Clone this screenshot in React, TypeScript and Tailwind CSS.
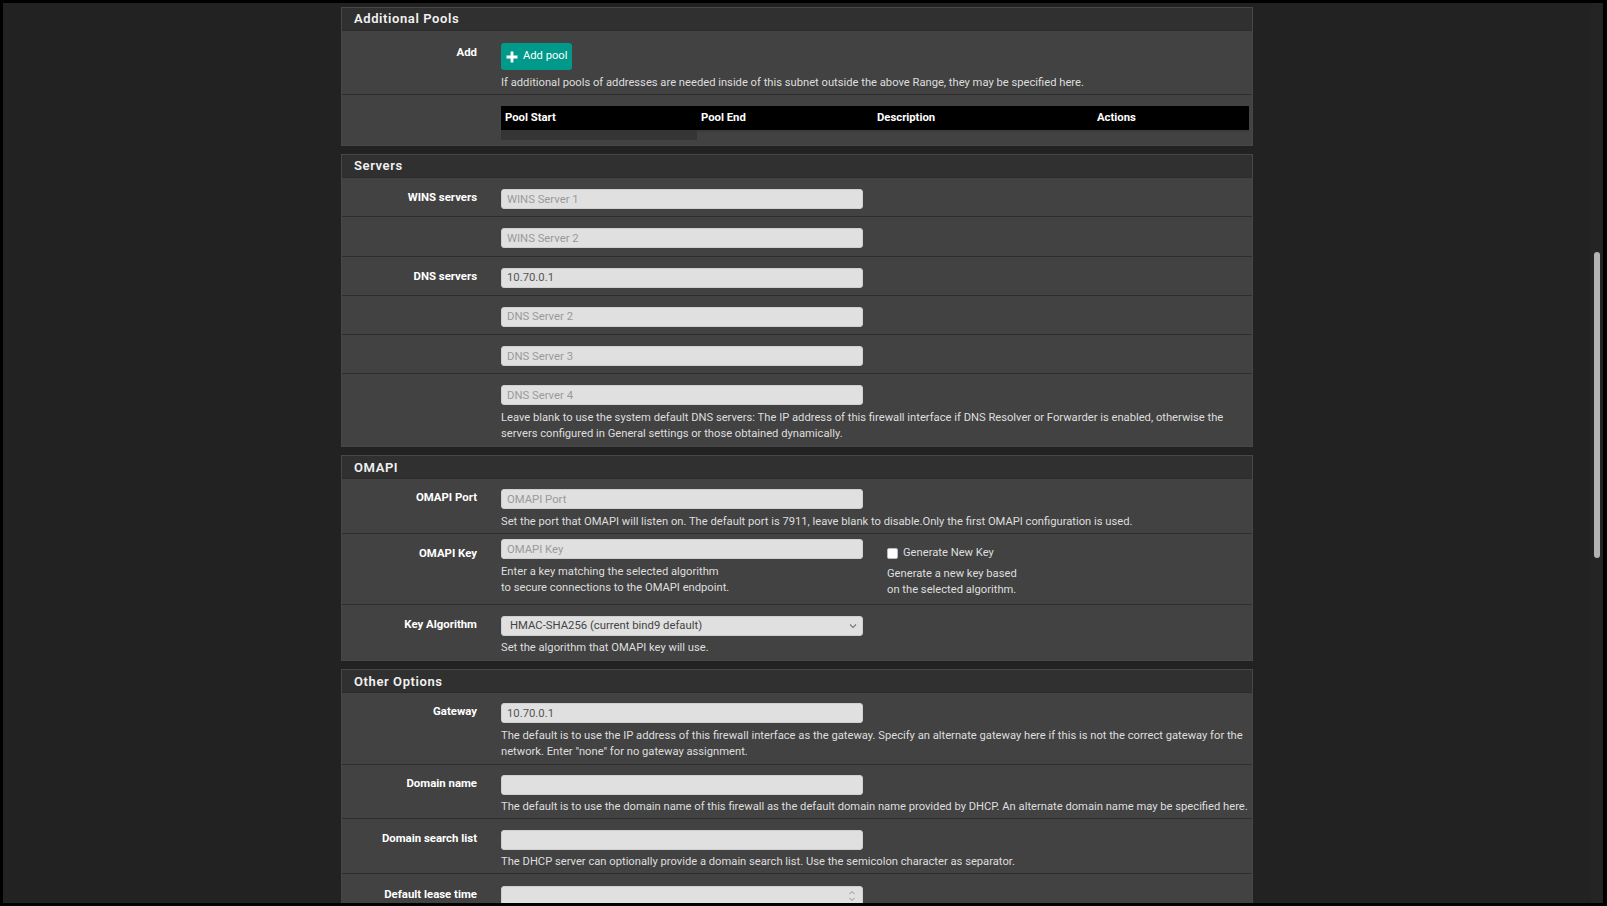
import React from "react";

const FONT = "font-[Roboto,'Liberation_Sans',sans-serif]";

function Panel({ title, children }: { title: string; children: React.ReactNode }) {
  return (
    <div className="mb-[8px] w-[912px] border border-[#474747] bg-[#424242]">
      <div className="flex h-[23px] items-center border-b border-[#2c2c2c] bg-[#303030] pl-[12px] text-[13px] font-semibold tracking-[0.6px] text-[#f2f2f2]">
        {title}
      </div>
      {children}
    </div>
  );
}

function Row({
  label,
  children,
  first,
  pt = "pt-[11px]",
  labelClass = "",
  pb = "pb-[4px]",
}: {
  label?: string;
  children: React.ReactNode;
  first?: boolean;
  pt?: string;
  labelClass?: string;
  pb?: string;
}) {
  return (
    <div className={`flex ${first ? "" : "border-t border-[#2e2e2e]"} ${pt} ${pb}`}>
      <div className={`w-[135px] shrink-0 text-right text-[11.4px] font-bold leading-[16px] text-white ${labelClass}`}>
        {label}
      </div>
      <div className="ml-[24px] w-[748px]">{children}</div>
    </div>
  );
}

function TextInput({ placeholder, value }: { placeholder?: string; value?: string }) {
  return (
    <input
      readOnly
      placeholder={placeholder}
      defaultValue={value}
      className="block h-[20px] w-[362px] rounded-[3px] border border-[#cfcfcf] bg-[#e0e0e0] px-[5px] text-[11.3px] text-[#555] outline-none placeholder:text-[#9a9a9a]"
    />
  );
}

function Help({ children, className = "mt-[5px]" }: { children: React.ReactNode; className?: string }) {
  return <div className={`text-[11.2px] leading-[16px] text-[#dedede] ${className}`}>{children}</div>;
}

function Spacer() {
  return <div className="h-[3.3px]" />;
}

export default function App() {
  return (
    <div className={`h-[906px] w-[1607px] bg-black pb-[3px] pl-[3px] pr-[4px] pt-[3px] ${FONT}`}>
      <div className="flex h-[900px] overflow-hidden bg-[#222222]">
        <div className="flex flex-1 flex-col items-center pt-[4px]">
          {/* Additional Pools */}
          <Panel title="Additional Pools">
            <Row label="Add" first pt="pt-[12px]" labelClass="pt-[1px]" pb="pb-[3px]">
              <button className="flex h-[27px] w-[71px] items-center gap-[5px] rounded-[3px] bg-[#00998a] pl-[5px] text-[11.2px] text-white">
                <svg width="12" height="12" viewBox="0 0 12 12">
                  <path d="M6 0.5v11M0.5 6h11" stroke="white" strokeWidth="2.8" strokeLinecap="butt" />
                </svg>
                <span>Add pool</span>
              </button>
              <Help className="mt-[5px]">
                If additional pools of addresses are needed inside of this subnet outside the above Range, they may be specified here.
              </Help>
            </Row>
            <Row pt="pt-[11px]" pb="pb-[5px]">
              <div className="flex h-[24px] items-center bg-black text-[11.3px] font-bold text-white">
                <div className="w-[196px] pl-[4px]">Pool Start</div>
                <div className="w-[175px] pl-[4px]">Pool End</div>
                <div className="w-[220px] pl-[5px]">Description</div>
                <div className="flex-1 pl-[5px]">Actions</div>
              </div>
              <div className="flex h-[10px]">
                <div className="h-[10px] w-[196px] bg-[#353535]" />
                <div className="h-[2px] flex-1 bg-[#3c3c3c]" />
              </div>
            </Row>
          </Panel>

          {/* Servers */}
          <Panel title="Servers">
            <Row label="WINS servers" first>
              <TextInput placeholder="WINS Server 1" />
              <Spacer />
            </Row>
            <Row>
              <TextInput placeholder="WINS Server 2" />
              <Spacer />
            </Row>
            <Row label="DNS servers">
              <TextInput value="10.70.0.1" />
              <Spacer />
            </Row>
            <Row>
              <TextInput placeholder="DNS Server 2" />
              <Spacer />
            </Row>
            <Row>
              <TextInput placeholder="DNS Server 3" />
              <Spacer />
            </Row>
            <Row pb="pb-[4px]">
              <TextInput placeholder="DNS Server 4" />
              <Help>
                Leave blank to use the system default DNS servers: The IP address of this firewall interface if DNS Resolver or Forwarder is enabled, otherwise the servers configured in General settings or those obtained dynamically.
              </Help>
            </Row>
          </Panel>

          {/* OMAPI */}
          <Panel title="OMAPI">
            <Row label="OMAPI Port" first pt="pt-[10px]" pb="pb-[3px]">
              <TextInput placeholder="OMAPI Port" />
              <Help>
                Set the port that OMAPI will listen on. The default port is 7911, leave blank to disable.Only the first OMAPI configuration is used.
              </Help>
            </Row>
            <Row label="OMAPI Key" pt="pt-[5px]" labelClass="pt-[6px]" pb="pb-[6px]">
              <div className="flex">
                <div className="w-[362px]">
                  <TextInput placeholder="OMAPI Key" />
                  <Help>
                    Enter a key matching the selected algorithm
                    <br />
                    to secure connections to the OMAPI endpoint.
                  </Help>
                </div>
                <div className="ml-[24px] pt-[4px]">
                  <label className="flex h-[20px] items-center gap-[5px] text-[11.2px] text-[#dedede]">
                    <span className="block h-[11px] w-[11px] rounded-[2px] border border-[#bbb] bg-white" />
                    <span>Generate New Key</span>
                  </label>
                  <Help className="mt-[3px]">
                    Generate a new key based
                    <br />
                    on the selected algorithm.
                  </Help>
                </div>
              </div>
            </Row>
            <Row label="Key Algorithm" pb="pb-[4px]">
              <div className="flex h-[20px] w-[362px] items-center justify-between rounded-[3px] border border-[#cfcfcf] bg-[#e0e0e0] pl-[8px] pr-[5px] text-[11.3px] text-[#444]">
                <span>HMAC-SHA256 (current bind9 default)</span>
                <svg width="8" height="6" viewBox="0 0 8 6">
                  <path d="M1 1.5l3 3 3-3" stroke="#777" strokeWidth="1.1" fill="none" />
                </svg>
              </div>
              <Help className="mt-[4px]">Set the algorithm that OMAPI key will use.</Help>
            </Row>
          </Panel>

          {/* Other Options */}
          <Panel title="Other Options">
            <Row label="Gateway" first pt="pt-[10px]">
              <TextInput value="10.70.0.1" />
              <Help>
                The default is to use the IP address of this firewall interface as the gateway. Specify an alternate gateway here if this is not the correct gateway for the network. Enter "none" for no gateway assignment.
              </Help>
            </Row>
            <Row label="Domain name" pt="pt-[10px]" pb="pb-[3px]">
              <TextInput />
              <Help className="mt-[4px] whitespace-nowrap">
                The default is to use the domain name of this firewall as the default domain name provided by DHCP. An alternate domain name may be specified here.
              </Help>
            </Row>
            <Row label="Domain search list" pb="pb-[3px]">
              <TextInput />
              <Help className="mt-[4px]">
                The DHCP server can optionally provide a domain search list. Use the semicolon character as separator.
              </Help>
            </Row>
            <Row label="Default lease time" pt="pt-[12px]">
              <div className="flex h-[20px] w-[362px] items-center justify-end rounded-[3px] border border-[#cfcfcf] bg-[#e0e0e0] pr-[6px]">
                <svg width="8" height="14" viewBox="0 0 8 14">
                  <path d="M1.5 5l2.5-2.5 2.5 2.5M1.5 9l2.5 2.5 2.5-2.5" stroke="#888" strokeWidth="0.9" fill="none" />
                </svg>
              </div>
              <Help>&nbsp;</Help>
            </Row>
          </Panel>
        </div>
        {/* scrollbar */}
        <div className="relative w-[12px] shrink-0 bg-[#242424]">
          <div className="absolute left-[3px] top-[249px] h-[306px] w-[6px] rounded-[3px] bg-[#b3b3b3]" />
        </div>
      </div>
    </div>
  );
}
